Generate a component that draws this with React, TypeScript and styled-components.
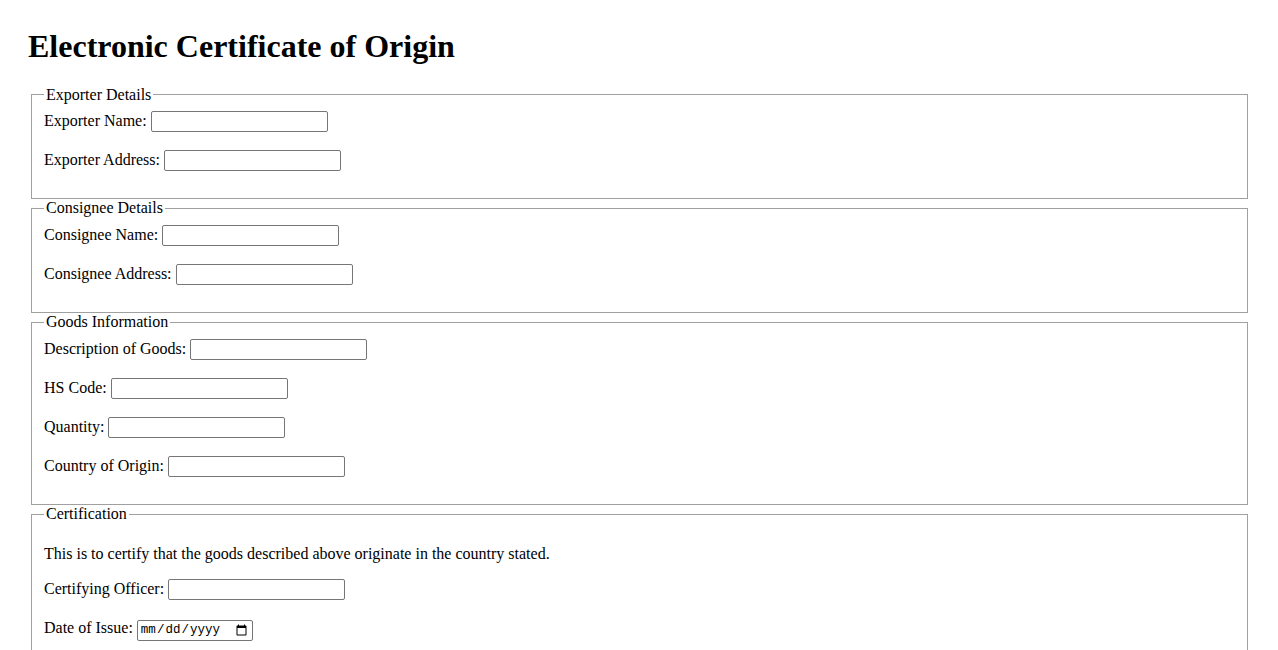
import React from "react";
import styled, { createGlobalStyle } from "styled-components";

const Global = createGlobalStyle`
  html, body { background: #fff; }
  body {
    margin: 0;
    padding: 28px;
    font-family: "Liberation Serif", "Times New Roman", serif;
    font-size: 16px;
    color: #000;
  }
`;

const Title = styled.h1`
  font-size: 32px;
  font-weight: bold;
  margin: 0 0 20.5px;
`;

const Section = styled.fieldset`
  margin: 0 2px 0 3px;
  border: 1px solid #a0a0a0;
  padding: 0.35em 0.75em 11.4px;
  min-inline-size: min-content;
`;

const Legend = styled.legend`
  padding: 0 2px;
`;

const Row = styled.div`
  margin-bottom: 16px;
  line-height: 23px;
`;

const Note = styled.p`
  margin: 16px 0 14px;
`;

const Field = styled.input`
  font-family: "Liberation Sans", Arial, sans-serif;
  font-size: 13.333px;
  line-height: normal;
  width: 177px;
  height: 21px;
  box-sizing: border-box;
  border: 1px solid #767676;
  border-radius: 2px;
  padding: 1px 2px;
  vertical-align: baseline;
`;

const DateField = styled(Field)`
  width: 116px;
  font-family: "Liberation Mono", "Courier New", monospace;
  font-size: 12.5px;
`;

const fields: { legend: string; rows: string[] }[] = [
  { legend: "Exporter Details", rows: ["Exporter Name:", "Exporter Address:"] },
  { legend: "Consignee Details", rows: ["Consignee Name:", "Consignee Address:"] },
  {
    legend: "Goods Information",
    rows: ["Description of Goods:", "HS Code:", "Quantity:", "Country of Origin:"],
  },
];

export default function App() {
  return (
    <>
      <Global />
      <Title>Electronic Certificate of Origin</Title>
      <form>
        {fields.map((f) => (
          <Section key={f.legend}>
            <Legend>{f.legend}</Legend>
            {f.rows.map((r) => (
              <Row key={r}>
                <label>{r}</label> <Field type="text" />
              </Row>
            ))}
          </Section>
        ))}
        <Section>
          <Legend>Certification</Legend>
          <Note>This is to certify that the goods described above originate in the country stated.</Note>
          <Row>
            <label>Certifying Officer:</label> <Field type="text" />
          </Row>
          <Row>
            <label>Date of Issue:</label> <DateField type="date" />
          </Row>
        </Section>
      </form>
    </>
  );
}
